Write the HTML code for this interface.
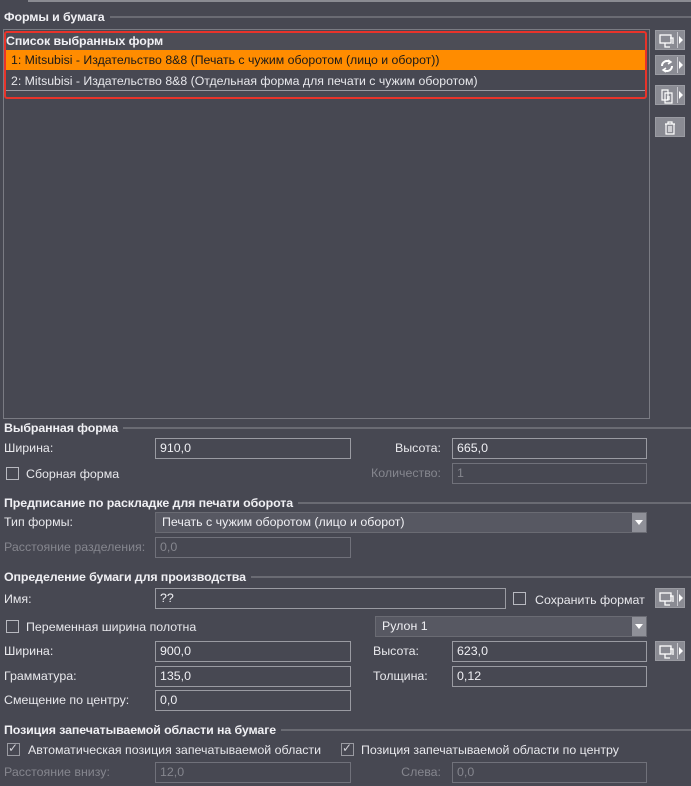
<!DOCTYPE html>
<html><head><meta charset="utf-8"><style>
*{box-sizing:border-box;margin:0;padding:0}
body{width:691px;height:786px;background:#474852;font-family:"Liberation Sans",Arial,sans-serif;font-size:12.4px;color:#e8e8ec;position:relative;overflow:hidden}
.a{position:absolute;white-space:nowrap}
.t{line-height:14px}
.sec{font-weight:bold;color:#f0f0f4;letter-spacing:-0.1px;background:#474852;padding-right:5px;z-index:2}
.ln{position:absolute;height:2px;background:#6a6b73}
.in{position:absolute;height:21px;border:1px solid #9a9ba2;padding:3px 0 0 4px;color:#f0f0f4;line-height:13px}
.dis{border-color:#70717a;color:#85868e}
.dl{color:#85868e}
.cb{position:absolute;width:13px;height:13px;border:1px solid #b8b9c0}
.cmb{position:absolute;height:21px;background:#575862;border:1px solid #6a6b73;padding:3px 0 0 6px;line-height:13px;color:#f0f0f4}
.cmb .ar{position:absolute;right:0;top:0;width:14px;height:19px;background:#8f9098}
.cmb .ar:after{content:"";position:absolute;left:3px;top:7px;border-left:4px solid transparent;border-right:4px solid transparent;border-top:5px solid #fff}
.btn{position:absolute;width:30px;height:20px;background:#8a8b93;border:1px solid #9a9ba2}
.btn .d{position:absolute;left:21px;top:1px;width:1px;height:16px;background:#c8c8ce}
.btn .tr{position:absolute;left:23px;top:5px;border-top:4px solid transparent;border-bottom:4px solid transparent;border-left:4px solid #fff}
.btn svg{position:absolute;left:3px;top:2px}
</style></head><body>
<div class="ln" style="left:28px;top:0;width:663px;background:#8a8b92"></div>

<div class="ln" style="left:60px;top:16px;width:631px"></div>
<div class="a t sec" style="left:4px;top:10px">Формы и бумага</div>

<div class="a" style="left:3px;top:29px;width:647px;height:390px;border:1px solid #7a7b83"></div>
<div class="a" style="left:5px;top:33px;width:641px;height:17px;background:#4c4d56"></div>
<div class="a t" style="left:6px;top:34px;font-weight:bold;color:#f0f0f4;letter-spacing:-0.1px">Список выбранных форм</div>
<div class="a" style="left:6px;top:50px;width:639px;height:20px;background:#ff8c00"></div>
<div class="a t" style="left:11px;top:53px;color:#1a1a1a;font-size:12.3px">1: Mitsubisi - Издательство 8&amp;8 (Печать с чужим оборотом (лицо и оборот))</div>
<div class="a t" style="left:11px;top:74px;font-size:12.3px">2: Mitsubisi - Издательство 8&amp;8 (Отдельная форма для печати с чужим оборотом)</div>
<div class="a" style="left:6px;top:90px;width:639px;height:1px;background:#9a9ba2"></div>
<div class="a" style="left:4px;top:31px;width:643px;height:68px;border:2px solid #e8332a;border-radius:3px"></div>

<div class="btn" style="left:655px;top:30px"><svg width="16" height="16" viewBox="0 0 16 16" fill="none" stroke="#fff" stroke-width="1.3"><rect x="1" y="2" width="11" height="8"/><path d="M6 10v4h5M11 5h3v6"/></svg><div class="d"></div><div class="tr"></div></div>
<div class="btn" style="left:655px;top:55px"><svg width="16" height="16" viewBox="0 0 16 16" fill="none" stroke="#fff" stroke-width="2"><path d="M3 8a5 5 0 0 1 8-4M13 8a5 5 0 0 1-8 4"/><path d="M9 2l3 2-3 2M7 14l-3-2 3-2" stroke-width="1.5"/></svg><div class="d"></div><div class="tr"></div></div>
<div class="btn" style="left:655px;top:85px"><svg width="16" height="16" viewBox="0 0 16 16" fill="none" stroke="#fff" stroke-width="1.2"><path d="M3 2h6v10H3zM6 5h7v10H6z"/><path d="M8 9h3M8 11h3"/></svg><div class="d"></div><div class="tr"></div></div>
<div class="btn" style="left:655px;top:117px"><svg width="24" height="16" viewBox="0 0 24 16" fill="none" stroke="#fff" stroke-width="1.2"><path d="M6 4h10M9 4V2h4v2M7 4v10h8V4M10 6v6M12 6v6"/></svg></div>

<div class="ln" style="left:60px;top:427px;width:631px"></div>
<div class="a t sec" style="left:4px;top:421px">Выбранная форма</div>
<div class="a t" style="left:4px;top:441px">Ширина:</div>
<div class="in" style="left:155px;top:438px;width:196px">910,0</div>
<div class="a t" style="left:341px;top:441px;width:100px;text-align:right">Высота:</div>
<div class="in" style="left:452px;top:438px;width:195px">665,0</div>
<div class="cb" style="left:6px;top:467px"></div>
<div class="a t" style="left:26px;top:467px">Сборная форма</div>
<div class="a t dl" style="left:341px;top:466px;width:100px;text-align:right">Количество:</div>
<div class="in dis" style="left:452px;top:463px;width:195px">1</div>

<div class="ln" style="left:60px;top:502px;width:631px"></div>
<div class="a t sec" style="left:4px;top:496px">Предписание по раскладке для печати оборота</div>
<div class="a t" style="left:4px;top:515px">Тип формы:</div>
<div class="cmb" style="left:155px;top:512px;width:492px">Печать с чужим оборотом (лицо и оборот)<div class="ar"></div></div>
<div class="a t dl" style="left:4px;top:540px">Расстояние разделения:</div>
<div class="in dis" style="left:155px;top:537px;width:196px">0,0</div>

<div class="ln" style="left:60px;top:576px;width:631px"></div>
<div class="a t sec" style="left:4px;top:570px">Определение бумаги для производства</div>
<div class="a t" style="left:4px;top:592px">Имя:</div>
<div class="in" style="left:155px;top:588px;width:351px">??</div>
<div class="cb" style="left:513px;top:592px"></div>
<div class="a t" style="left:535px;top:593px">Сохранить формат</div>
<div class="btn" style="left:655px;top:588px"><svg width="16" height="16" viewBox="0 0 16 16" fill="none" stroke="#fff" stroke-width="1.3"><rect x="1" y="2" width="11" height="8"/><path d="M6 10v4h5M11 5h3v6"/></svg><div class="d"></div><div class="tr"></div></div>
<div class="cb" style="left:6px;top:620px"></div>
<div class="a t" style="left:26px;top:620px">Переменная ширина полотна</div>
<div class="cmb" style="left:375px;top:616px;width:272px">Рулон 1<div class="ar"></div></div>
<div class="a t" style="left:4px;top:644px">Ширина:</div>
<div class="in" style="left:155px;top:641px;width:196px">900,0</div>
<div class="a t" style="left:373px;top:644px">Высота:</div>
<div class="in" style="left:452px;top:641px;width:195px">623,0</div>
<div class="btn" style="left:655px;top:641px"><svg width="16" height="16" viewBox="0 0 16 16" fill="none" stroke="#fff" stroke-width="1.3"><rect x="1" y="2" width="11" height="8"/><path d="M6 10v4h5M11 5h3v6"/></svg><div class="d"></div><div class="tr"></div></div>
<div class="a t" style="left:4px;top:669px">Грамматура:</div>
<div class="in" style="left:155px;top:666px;width:196px">135,0</div>
<div class="a t" style="left:373px;top:669px">Толщина:</div>
<div class="in" style="left:452px;top:666px;width:195px">0,12</div>
<div class="a t" style="left:4px;top:693px">Смещение по центру:</div>
<div class="in" style="left:155px;top:690px;width:196px">0,0</div>

<div class="ln" style="left:60px;top:729px;width:631px"></div>
<div class="a t sec" style="left:4px;top:723px">Позиция запечатываемой области на бумаге</div>
<div class="cb" style="left:7px;top:743px;border-color:#9a9ba2"></div>
<div class="a" style="left:8px;top:741px;color:#d0d0d6;font-size:12px">✓</div>
<div class="a t" style="left:28px;top:743px">Автоматическая позиция запечатываемой области</div>
<div class="cb" style="left:341px;top:743px;border-color:#9a9ba2"></div>
<div class="a" style="left:342px;top:741px;color:#d0d0d6;font-size:12px">✓</div>
<div class="a t" style="left:361px;top:743px">Позиция запечатываемой области по центру</div>
<div class="a t dl" style="left:4px;top:765px">Расстояние внизу:</div>
<div class="in dis" style="left:155px;top:762px;width:196px">12,0</div>
<div class="a t dl" style="left:341px;top:765px;width:100px;text-align:right">Слева:</div>
<div class="in dis" style="left:452px;top:762px;width:195px">0,0</div>
</body></html>
